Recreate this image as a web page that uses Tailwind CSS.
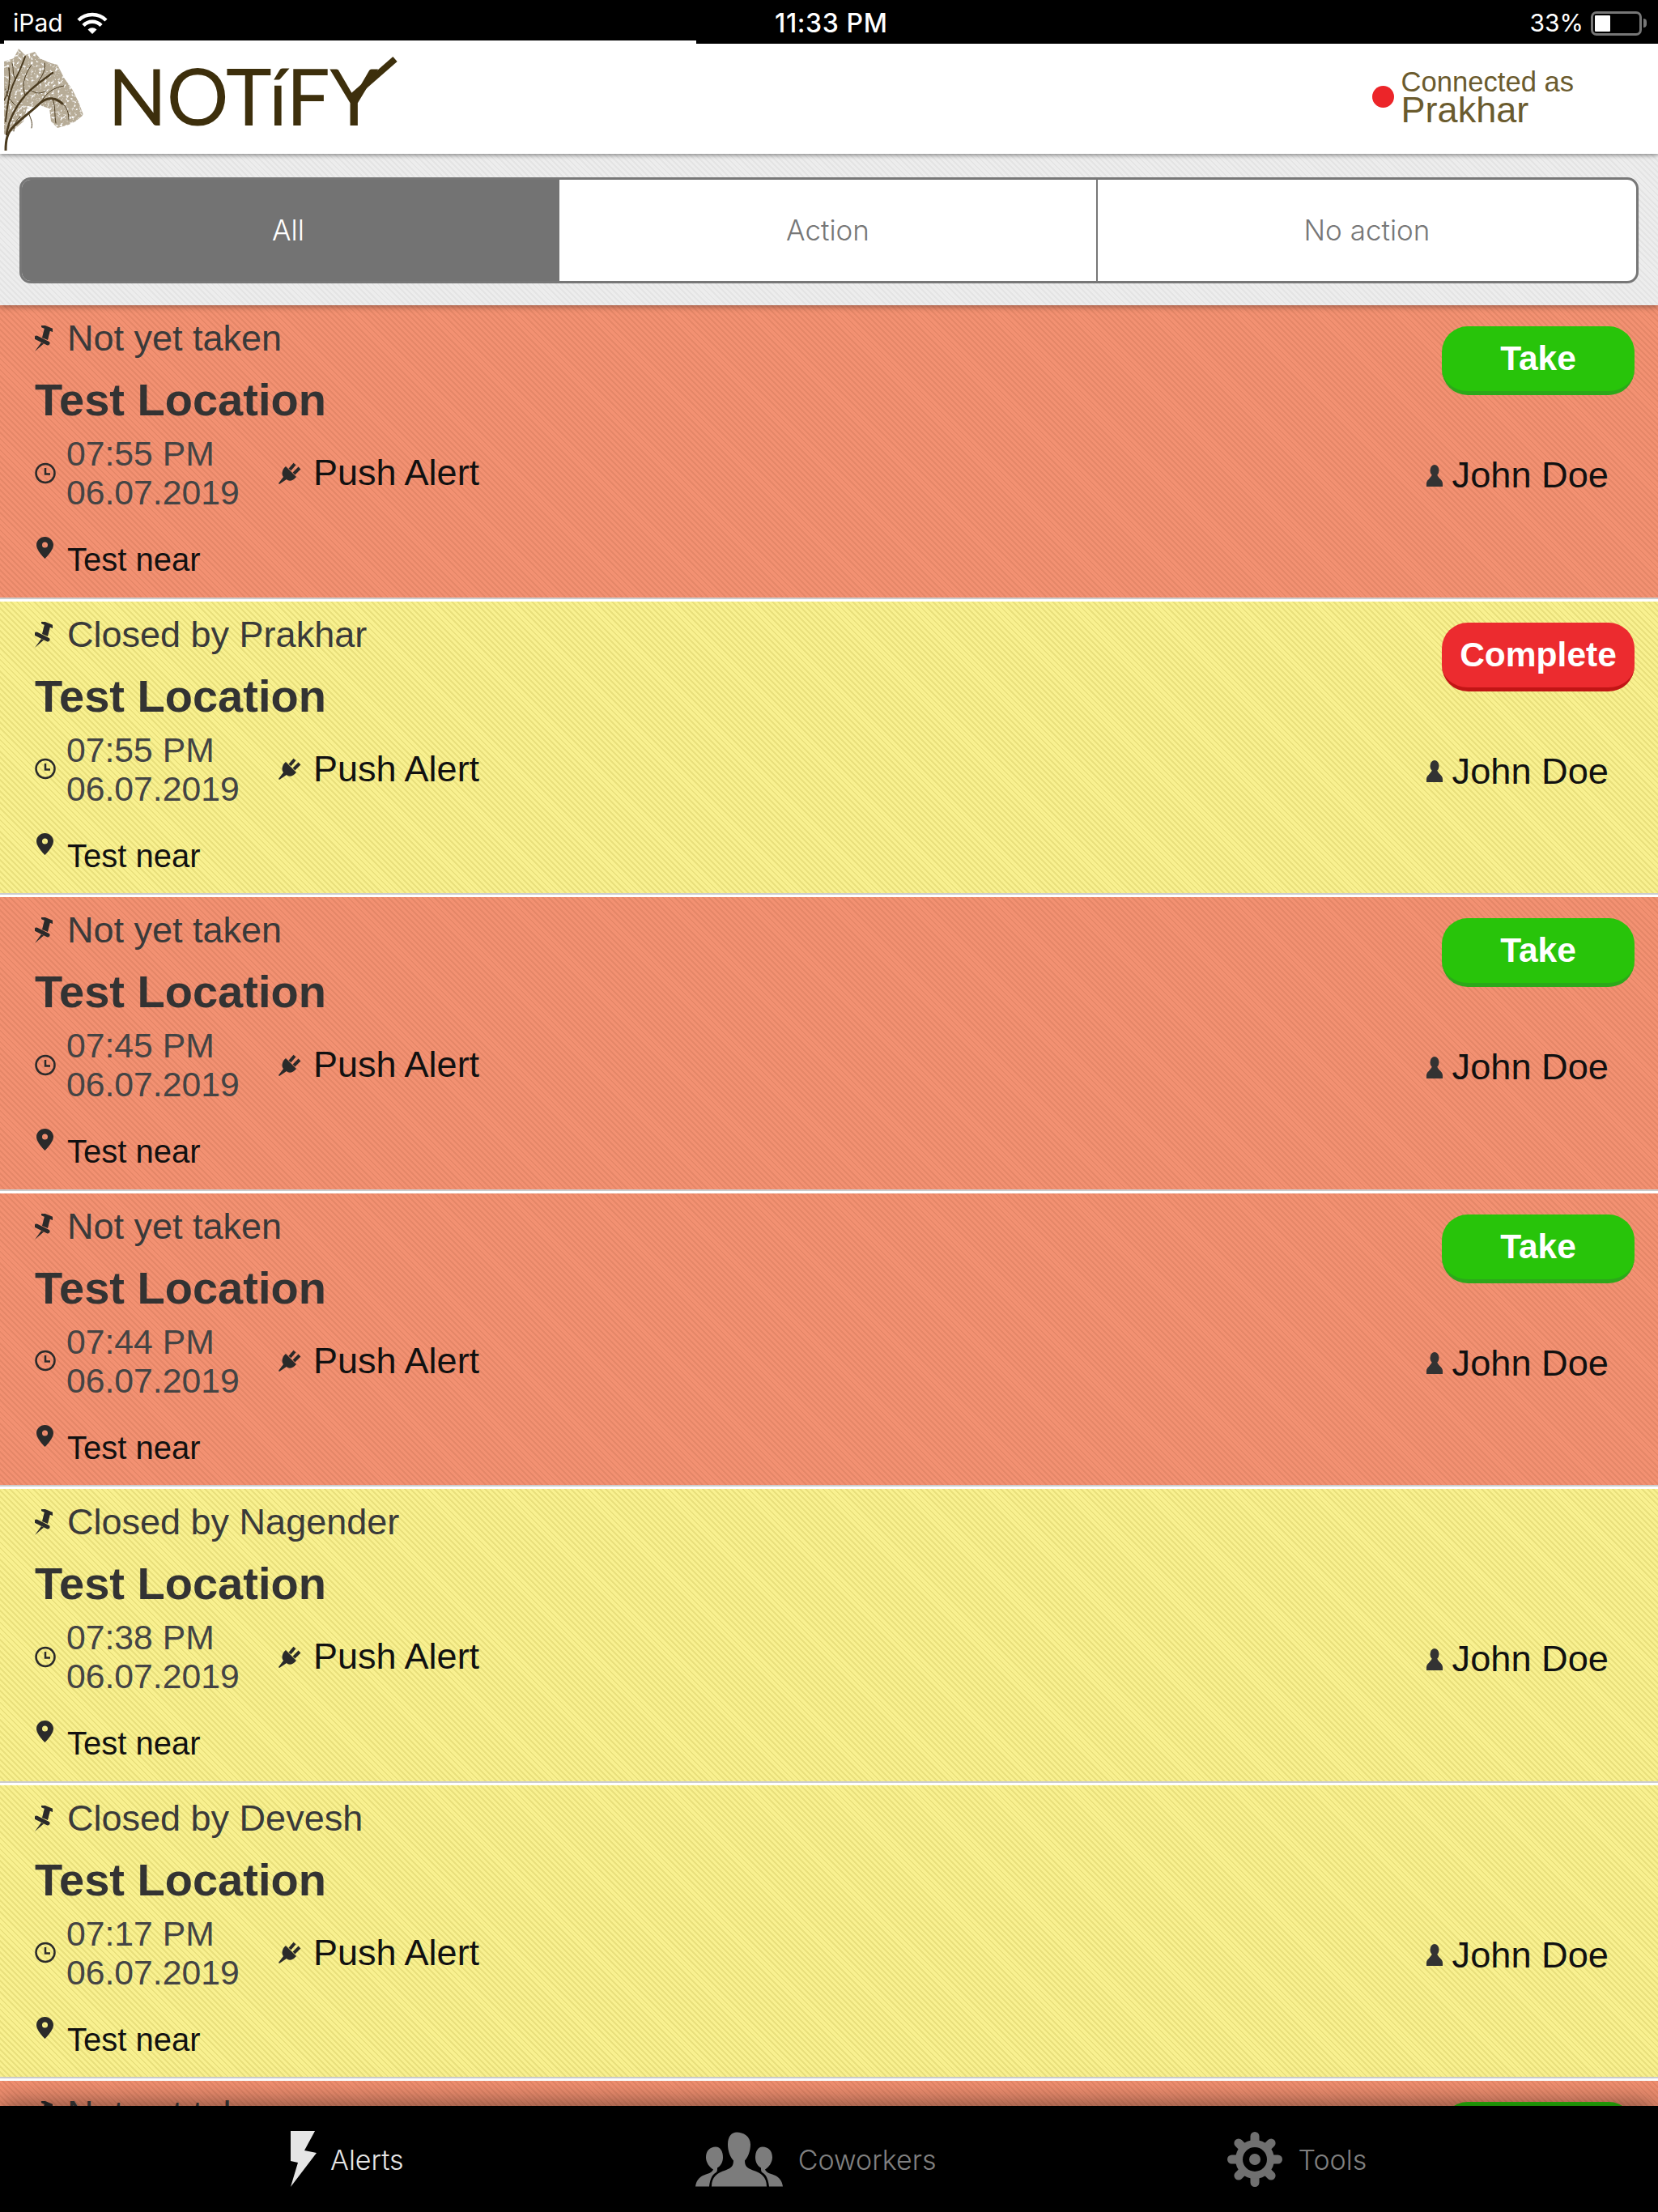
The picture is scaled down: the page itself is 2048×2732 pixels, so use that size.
<!DOCTYPE html>
<html lang="en">
<head>
  <meta charset="UTF-8">
  <title>Notify</title>
  <script src="https://cdn.jsdelivr.net/npm/@tailwindcss/browser@4"></script>
</head>
<body class="bg-black font-['Liberation_Sans',Arial,sans-serif]">
  <!-- icon sprite -->
  <svg class="hidden">
    <symbol id="pin" viewBox="0 0 22 32">
      <path d="M10 1L22 6" stroke="currentColor" stroke-width="4" stroke-linecap="round"/>
      <path d="M12 3L19 6L16 18L9 15Z" fill="currentColor"/>
      <path d="M2 15L16 22" stroke="currentColor" stroke-width="5" stroke-linecap="round"/>
      <path d="M8 21L11 22.500L0 32Z" fill="currentColor"/>
    </symbol>
    <symbol id="clock" viewBox="0 0 26 27">
      <circle cx="13" cy="13.500" r="11.500" fill="none" stroke="currentColor" stroke-width="2.500"/>
      <path d="M13 7V14.500H19" fill="none" stroke="currentColor" stroke-width="2.500"/>
    </symbol>
    <symbol id="plug" viewBox="0 0 28 27">
      <path d="M9 5L22 18C18 23 13 24 10 21L1 27L0 26L6 18C3 14 5 8 9 5Z" fill="currentColor"/>
      <path d="M14 9L20 2M19 14L26 7" stroke="currentColor" stroke-width="4"/>
    </symbol>
    <symbol id="marker" viewBox="0 0 21 27">
      <path fill-rule="evenodd" d="M10.500 0C4.700 0 0 4.700 0 10C0 17 10.500 27 10.500 27S21 17 21 10C21 4.700 16.300 0 10.500 0ZM10.500 6.500A3.500 3.500 0 1 1 10.500 13.500A3.500 3.500 0 1 1 10.500 6.500Z" fill="currentColor"/>
    </symbol>
    <symbol id="user" viewBox="0 0 20 27">
      <ellipse cx="10" cy="7" rx="5.500" ry="7" fill="currentColor"/>
      <path d="M0 27V23C0 19 5 17 7 12H13C15 17 20 19 20 23V27Z" fill="currentColor"/>
    </symbol>
  </svg>

  <div class="flex flex-col h-[2732px] overflow-hidden bg-white">
    <!-- status bar -->
    <div class="relative flex items-center justify-between h-[50px] pt-[7px] pl-[16px] pr-[14px] bg-black text-white font-['Inter',sans-serif] text-[30px]">
      <div class="flex items-center gap-[17px]">
        <span>iPad</span>
        <svg class="w-[38px] h-[27px]" viewBox="0 0 38 27">
          <path d="M2 10A24 24 0 0 1 36 10" fill="none" stroke="white" stroke-width="4.500"/>
          <path d="M8 16.500A15 15 0 0 1 30 16.500" fill="none" stroke="white" stroke-width="4.500"/>
          <path d="M13.500 21.500A8 8 0 0 1 24.500 21.500L19 27Z" fill="white"/>
        </svg>
      </div>
      <span class="absolute left-[957px] text-[32px] tracking-[0.6px] font-medium">11:33 PM</span>
      <div class="flex items-center">
        <span class="mr-[9px]">33%</span>
        <div class="w-[63px] h-[30px] p-[2px] rounded-[7px] border-[3px] border-[#777]">
          <div class="w-[19px] h-full bg-white rounded-[1px]"></div>
        </div>
        <div class="w-[4px] h-[11px] ml-[2px] bg-[#777] rounded-r-full"></div>
      </div>
    </div>

    <!-- header -->
    <div class="relative z-20 h-[140px] bg-white shadow-[0_2px_5px_rgba(0,0,0,0.4)]">
      <div class="flex h-[4px]">
        <div class="w-[5px] bg-black"></div>
        <div class="w-[855px] bg-white"></div>
        <div class="flex-1 bg-black"></div>
      </div>
      <div class="flex items-start justify-between h-[136px]">
        <div class="flex items-start pl-[5px]">
          <svg class="w-[100px] h-[132px]" viewBox="0 0 100 132">
            <defs>
              <filter id="leaves" x="0" y="0" width="100%" height="100%">
                <feTurbulence type="fractalNoise" baseFrequency="0.3" numOctaves="2" seed="4"/>
                <feColorMatrix type="matrix" values="0 0 0 0 0.47  0 0 0 0 0.41  0 0 0 0 0.31  5 0 0 0 -1.3"/>
                <feComposite in2="SourceGraphic" operator="in"/>
                <feGaussianBlur stdDeviation="0.7"/>
              </filter>
            </defs>
            <path filter="url(#leaves)" fill="black" d="M0 22L12 18L18 6L26 14L38 10L44 18L58 24L66 26L74 42L84 56L92 72L98 88L88 96L80 100L66 104L58 96L56 80L44 76L28 80L24 96L10 108L0 112Z"/>
            <g fill="none" stroke="#4a3a1e" stroke-linecap="round">
              <path d="M2 132C2 118 4 110 12 102C24 90 36 82 46 72C54 66 64 66 72 74" stroke-width="3"/>
              <path d="M3 112C6 94 14 78 26 64C34 54 46 46 60 36" stroke-width="2.500"/>
              <path d="M2 96C4 76 6 60 14 44C18 36 22 28 26 16" stroke-width="2"/>
              <path d="M0 70C6 60 8 46 6 30" stroke-width="1.500"/>
              <path d="M26 64C22 52 24 40 34 26M40 52C44 42 52 36 50 24M46 72C52 60 62 54 74 52M30 84C32 92 36 96 34 104M72 74C78 78 80 86 80 94M60 68C64 78 62 88 64 98M14 44C10 38 12 30 10 24M14 76C8 70 4 66 2 56M20 90C14 96 12 100 12 108M34 58C40 62 46 62 52 58" stroke-width="1"/>
            </g>
          </svg>
          <div class="relative ml-[28px] mt-[16px] font-['Lato',sans-serif] text-[96px] leading-[96px] tracking-[-0.5px] text-[#3d2f0c]">NOTíFY
            <svg class="absolute left-[276px] top-[0px] w-[84px] h-[60px]" viewBox="0 0 84 60">
              <path d="M23 52L79 3" stroke="#3d2f0c" stroke-width="8"/>
            </svg>
          </div>
        </div>
        <div class="flex items-center pr-[104px] pt-[30px]">
          <div class="w-[27px] h-[27px] mr-[9px] rounded-full bg-[#ec2529]"></div>
          <div class="text-[#6b5b2e]">
            <div class="text-[34.6px] leading-[34px]">Connected as</div>
            <div class="text-[45px] leading-[36px]">Prakhar</div>
          </div>
        </div>
      </div>
    </div>

    <!-- filter tabs -->
    <div class="relative z-10 h-[187px] px-[24px] pt-[29px] shadow-[0_2px_7px_rgba(0,0,0,0.35)] bg-[repeating-linear-gradient(45deg,#ededed_0,#ededed_3px,#e4e4e4_3px,#e4e4e4_5px)]">
      <div class="grid grid-cols-[664px_665px_1fr] h-[131px] rounded-[14px] border-[3px] border-[#777] bg-white overflow-hidden font-['Inter',sans-serif] text-[35px] font-light text-center leading-[125px] text-[#777]">
        <div class="pr-[6px] bg-[#737373] text-white">All</div>
        <div class="border-r-2 border-[#777]">Action</div>
        <div>No action</div>
      </div>
    </div>

    <!-- alert list -->
    <div class="flex-1 overflow-hidden">
      <div class="flex justify-between h-[362.5px] mb-[3px] border-b-2 border-[#ccc] bg-[repeating-linear-gradient(45deg,#f39172_0,#f39172_3px,#e58768_3px,#e58768_5px)]">
        <div class="pl-[43px] pt-[16px]">
          <div class="flex items-center h-[50px] gap-[18px] text-[45px] text-[#3a3a3a]"><svg class="w-[22px] h-[32px] text-[#2a2a2a]"><use href="#pin"/></svg>Not yet taken</div>
          <div class="mt-[21px] h-[60px] text-[56px] leading-[60px] font-bold text-[#333]">Test Location</div>
          <div class="flex items-center mt-[12px]">
            <svg class="w-[26px] h-[27px] text-[#2a2a2a]"><use href="#clock"/></svg>
            <div class="w-[262px] ml-[13px] text-[42.7px] leading-[48px] text-[#444]"><div>07:55 PM</div><div>06.07.2019</div></div>
            <svg class="w-[28px] h-[27px] text-[#2a2a2a]"><use href="#plug"/></svg>
            <span class="ml-[15px] text-[45px] text-[#111]">Push Alert</span>
          </div>
          <div class="flex items-start mt-[31px] pl-[2px]">
            <svg class="w-[21px] h-[27px] text-[#2a2a2a]"><use href="#marker"/></svg>
            <span class="ml-[17px] mt-[5px] text-[40px] leading-[46px] text-[#111]">Test near</span>
          </div>
        </div>
        <div class="flex flex-col items-end pr-[29px] pt-[26px]">
          <div class="flex items-center justify-center w-[238px] h-[85px] rounded-[32px] border-b-[5px] border-[#2ca81a] bg-[#28c40a] text-[42.5px] font-bold text-white">Take</div>
          <div class="flex items-center gap-[12px] h-[50px] mt-[74px] mr-[32px] text-[45.2px] text-[#111]"><svg class="w-[20px] h-[27px] text-[#333]"><use href="#user"/></svg>John Doe</div>
        </div>
      </div>

      <div class="flex justify-between h-[362.5px] mb-[3px] border-b-2 border-[#ccc] bg-[repeating-linear-gradient(45deg,#f9f190_0,#f9f190_3px,#e9e07d_3px,#e9e07d_5px)]">
        <div class="pl-[43px] pt-[16px]">
          <div class="flex items-center h-[50px] gap-[18px] text-[45px] text-[#3a3a3a]"><svg class="w-[22px] h-[32px] text-[#2a2a2a]"><use href="#pin"/></svg>Closed by Prakhar</div>
          <div class="mt-[21px] h-[60px] text-[56px] leading-[60px] font-bold text-[#333]">Test Location</div>
          <div class="flex items-center mt-[12px]">
            <svg class="w-[26px] h-[27px] text-[#2a2a2a]"><use href="#clock"/></svg>
            <div class="w-[262px] ml-[13px] text-[42.7px] leading-[48px] text-[#444]"><div>07:55 PM</div><div>06.07.2019</div></div>
            <svg class="w-[28px] h-[27px] text-[#2a2a2a]"><use href="#plug"/></svg>
            <span class="ml-[15px] text-[45px] text-[#111]">Push Alert</span>
          </div>
          <div class="flex items-start mt-[31px] pl-[2px]">
            <svg class="w-[21px] h-[27px] text-[#2a2a2a]"><use href="#marker"/></svg>
            <span class="ml-[17px] mt-[5px] text-[40px] leading-[46px] text-[#111]">Test near</span>
          </div>
        </div>
        <div class="flex flex-col items-end pr-[29px] pt-[26px]">
          <div class="flex items-center justify-center w-[238px] h-[85px] rounded-[32px] border-b-[5px] border-[#c11515] bg-[#ec2b2f] text-[42.5px] font-bold text-white">Complete</div>
          <div class="flex items-center gap-[12px] h-[50px] mt-[74px] mr-[32px] text-[45.2px] text-[#111]"><svg class="w-[20px] h-[27px] text-[#333]"><use href="#user"/></svg>John Doe</div>
        </div>
      </div>

      <div class="flex justify-between h-[362.5px] mb-[3px] border-b-2 border-[#ccc] bg-[repeating-linear-gradient(45deg,#f39172_0,#f39172_3px,#e58768_3px,#e58768_5px)]">
        <div class="pl-[43px] pt-[16px]">
          <div class="flex items-center h-[50px] gap-[18px] text-[45px] text-[#3a3a3a]"><svg class="w-[22px] h-[32px] text-[#2a2a2a]"><use href="#pin"/></svg>Not yet taken</div>
          <div class="mt-[21px] h-[60px] text-[56px] leading-[60px] font-bold text-[#333]">Test Location</div>
          <div class="flex items-center mt-[12px]">
            <svg class="w-[26px] h-[27px] text-[#2a2a2a]"><use href="#clock"/></svg>
            <div class="w-[262px] ml-[13px] text-[42.7px] leading-[48px] text-[#444]"><div>07:45 PM</div><div>06.07.2019</div></div>
            <svg class="w-[28px] h-[27px] text-[#2a2a2a]"><use href="#plug"/></svg>
            <span class="ml-[15px] text-[45px] text-[#111]">Push Alert</span>
          </div>
          <div class="flex items-start mt-[31px] pl-[2px]">
            <svg class="w-[21px] h-[27px] text-[#2a2a2a]"><use href="#marker"/></svg>
            <span class="ml-[17px] mt-[5px] text-[40px] leading-[46px] text-[#111]">Test near</span>
          </div>
        </div>
        <div class="flex flex-col items-end pr-[29px] pt-[26px]">
          <div class="flex items-center justify-center w-[238px] h-[85px] rounded-[32px] border-b-[5px] border-[#2ca81a] bg-[#28c40a] text-[42.5px] font-bold text-white">Take</div>
          <div class="flex items-center gap-[12px] h-[50px] mt-[74px] mr-[32px] text-[45.2px] text-[#111]"><svg class="w-[20px] h-[27px] text-[#333]"><use href="#user"/></svg>John Doe</div>
        </div>
      </div>

      <div class="flex justify-between h-[362.5px] mb-[3px] border-b-2 border-[#ccc] bg-[repeating-linear-gradient(45deg,#f39172_0,#f39172_3px,#e58768_3px,#e58768_5px)]">
        <div class="pl-[43px] pt-[16px]">
          <div class="flex items-center h-[50px] gap-[18px] text-[45px] text-[#3a3a3a]"><svg class="w-[22px] h-[32px] text-[#2a2a2a]"><use href="#pin"/></svg>Not yet taken</div>
          <div class="mt-[21px] h-[60px] text-[56px] leading-[60px] font-bold text-[#333]">Test Location</div>
          <div class="flex items-center mt-[12px]">
            <svg class="w-[26px] h-[27px] text-[#2a2a2a]"><use href="#clock"/></svg>
            <div class="w-[262px] ml-[13px] text-[42.7px] leading-[48px] text-[#444]"><div>07:44 PM</div><div>06.07.2019</div></div>
            <svg class="w-[28px] h-[27px] text-[#2a2a2a]"><use href="#plug"/></svg>
            <span class="ml-[15px] text-[45px] text-[#111]">Push Alert</span>
          </div>
          <div class="flex items-start mt-[31px] pl-[2px]">
            <svg class="w-[21px] h-[27px] text-[#2a2a2a]"><use href="#marker"/></svg>
            <span class="ml-[17px] mt-[5px] text-[40px] leading-[46px] text-[#111]">Test near</span>
          </div>
        </div>
        <div class="flex flex-col items-end pr-[29px] pt-[26px]">
          <div class="flex items-center justify-center w-[238px] h-[85px] rounded-[32px] border-b-[5px] border-[#2ca81a] bg-[#28c40a] text-[42.5px] font-bold text-white">Take</div>
          <div class="flex items-center gap-[12px] h-[50px] mt-[74px] mr-[32px] text-[45.2px] text-[#111]"><svg class="w-[20px] h-[27px] text-[#333]"><use href="#user"/></svg>John Doe</div>
        </div>
      </div>

      <div class="flex justify-between h-[362.5px] mb-[3px] border-b-2 border-[#ccc] bg-[repeating-linear-gradient(45deg,#f9f190_0,#f9f190_3px,#e9e07d_3px,#e9e07d_5px)]">
        <div class="pl-[43px] pt-[16px]">
          <div class="flex items-center h-[50px] gap-[18px] text-[45px] text-[#3a3a3a]"><svg class="w-[22px] h-[32px] text-[#2a2a2a]"><use href="#pin"/></svg>Closed by Nagender</div>
          <div class="mt-[21px] h-[60px] text-[56px] leading-[60px] font-bold text-[#333]">Test Location</div>
          <div class="flex items-center mt-[12px]">
            <svg class="w-[26px] h-[27px] text-[#2a2a2a]"><use href="#clock"/></svg>
            <div class="w-[262px] ml-[13px] text-[42.7px] leading-[48px] text-[#444]"><div>07:38 PM</div><div>06.07.2019</div></div>
            <svg class="w-[28px] h-[27px] text-[#2a2a2a]"><use href="#plug"/></svg>
            <span class="ml-[15px] text-[45px] text-[#111]">Push Alert</span>
          </div>
          <div class="flex items-start mt-[31px] pl-[2px]">
            <svg class="w-[21px] h-[27px] text-[#2a2a2a]"><use href="#marker"/></svg>
            <span class="ml-[17px] mt-[5px] text-[40px] leading-[46px] text-[#111]">Test near</span>
          </div>
        </div>
        <div class="flex flex-col items-end pr-[29px] pt-[185px]">
          <div class="flex items-center gap-[12px] h-[50px] mr-[32px] text-[45.2px] text-[#111]"><svg class="w-[20px] h-[27px] text-[#333]"><use href="#user"/></svg>John Doe</div>
        </div>
      </div>

      <div class="flex justify-between h-[362.5px] mb-[3px] border-b-2 border-[#ccc] bg-[repeating-linear-gradient(45deg,#f9f190_0,#f9f190_3px,#e9e07d_3px,#e9e07d_5px)]">
        <div class="pl-[43px] pt-[16px]">
          <div class="flex items-center h-[50px] gap-[18px] text-[45px] text-[#3a3a3a]"><svg class="w-[22px] h-[32px] text-[#2a2a2a]"><use href="#pin"/></svg>Closed by Devesh</div>
          <div class="mt-[21px] h-[60px] text-[56px] leading-[60px] font-bold text-[#333]">Test Location</div>
          <div class="flex items-center mt-[12px]">
            <svg class="w-[26px] h-[27px] text-[#2a2a2a]"><use href="#clock"/></svg>
            <div class="w-[262px] ml-[13px] text-[42.7px] leading-[48px] text-[#444]"><div>07:17 PM</div><div>06.07.2019</div></div>
            <svg class="w-[28px] h-[27px] text-[#2a2a2a]"><use href="#plug"/></svg>
            <span class="ml-[15px] text-[45px] text-[#111]">Push Alert</span>
          </div>
          <div class="flex items-start mt-[31px] pl-[2px]">
            <svg class="w-[21px] h-[27px] text-[#2a2a2a]"><use href="#marker"/></svg>
            <span class="ml-[17px] mt-[5px] text-[40px] leading-[46px] text-[#111]">Test near</span>
          </div>
        </div>
        <div class="flex flex-col items-end pr-[29px] pt-[185px]">
          <div class="flex items-center gap-[12px] h-[50px] mr-[32px] text-[45.2px] text-[#111]"><svg class="w-[20px] h-[27px] text-[#333]"><use href="#user"/></svg>John Doe</div>
        </div>
      </div>

      <!-- cut off by the tab bar -->
      <div class="flex justify-between h-[362.5px] bg-[repeating-linear-gradient(45deg,#f39172_0,#f39172_3px,#e58768_3px,#e58768_5px)]">
        <div class="pl-[43px] pt-[16px]">
          <div class="flex items-center h-[50px] gap-[18px] text-[45px] text-[#3a3a3a]"><svg class="w-[22px] h-[32px] text-[#2a2a2a]"><use href="#pin"/></svg>Not yet taken</div>
        </div>
        <div class="flex flex-col items-end pr-[29px] pt-[26px]">
          <div class="w-[238px] h-[85px] rounded-[32px] bg-[#28c40a]"></div>
        </div>
      </div>
    </div>

    <!-- tab bar -->
    <div class="relative z-10 flex items-center gap-[360px] h-[131px] pl-[359px] bg-black shadow-[0_-3px_30px_rgba(0,0,0,0.5)] font-['Inter',sans-serif] text-[34px] font-light">
      <div class="flex items-center gap-[17px] text-[#e5e5e5]">
        <svg class="w-[32px] h-[69px]" viewBox="0 0 32 69"><path d="M0 0H30L17 24L32 27L0 69L9 39L0 37Z" fill="#e5e5e5"/></svg>
        <span class="mt-[2px]">Alerts</span>
      </div>
      <div class="flex items-center gap-[19px] text-[#808080]">
        <svg class="w-[108px] h-[68px]" viewBox="11 13 108 67">
          <path d="M31 80C31 68 38 63 48 60C56 57 58 54 58 48C54 44 51 36 51 28C51 18 56 13 62 13C70 13 79 18 79 28C79 36 76 44 72 48C72 54 74 57 82 60C92 63 99 68 99 80Z" fill="#7c7c7c"/>
          <path id="sideUser" d="M11 80C12 72 17 67 24 65C28 64 32 62 33 59C28 56 24 50 24 44C24 36 29 31 36 31C42 31 45 37 45 44C45 50 42 55 38 57C38 60 38 62 36 63C31 66 29 72 28 80Z" fill="#7c7c7c"/>
          <use href="#sideUser" transform="matrix(-1 0 0 1 130 0)"/>
        </svg>
        <span class="mt-[2px]">Coworkers</span>
      </div>
      <div class="flex items-center gap-[19px] text-[#808080]">
        <svg class="w-[68px] h-[68px]" viewBox="0 0 68 68">
          <g stroke="#707070" stroke-width="11" stroke-linecap="round">
            <path d="M34 5.500V62.500M5.500 34H62.500M13.900 13.900L54.100 54.100M54.100 13.900L13.900 54.100"/>
          </g>
          <circle cx="34" cy="34" r="24" fill="#707070"/>
          <circle cx="34" cy="34" r="15" fill="black"/>
          <circle cx="34" cy="34" r="7" fill="#707070"/>
        </svg>
        <span class="mt-[2px]">Tools</span>
      </div>
    </div>
  </div>
</body>
</html>
